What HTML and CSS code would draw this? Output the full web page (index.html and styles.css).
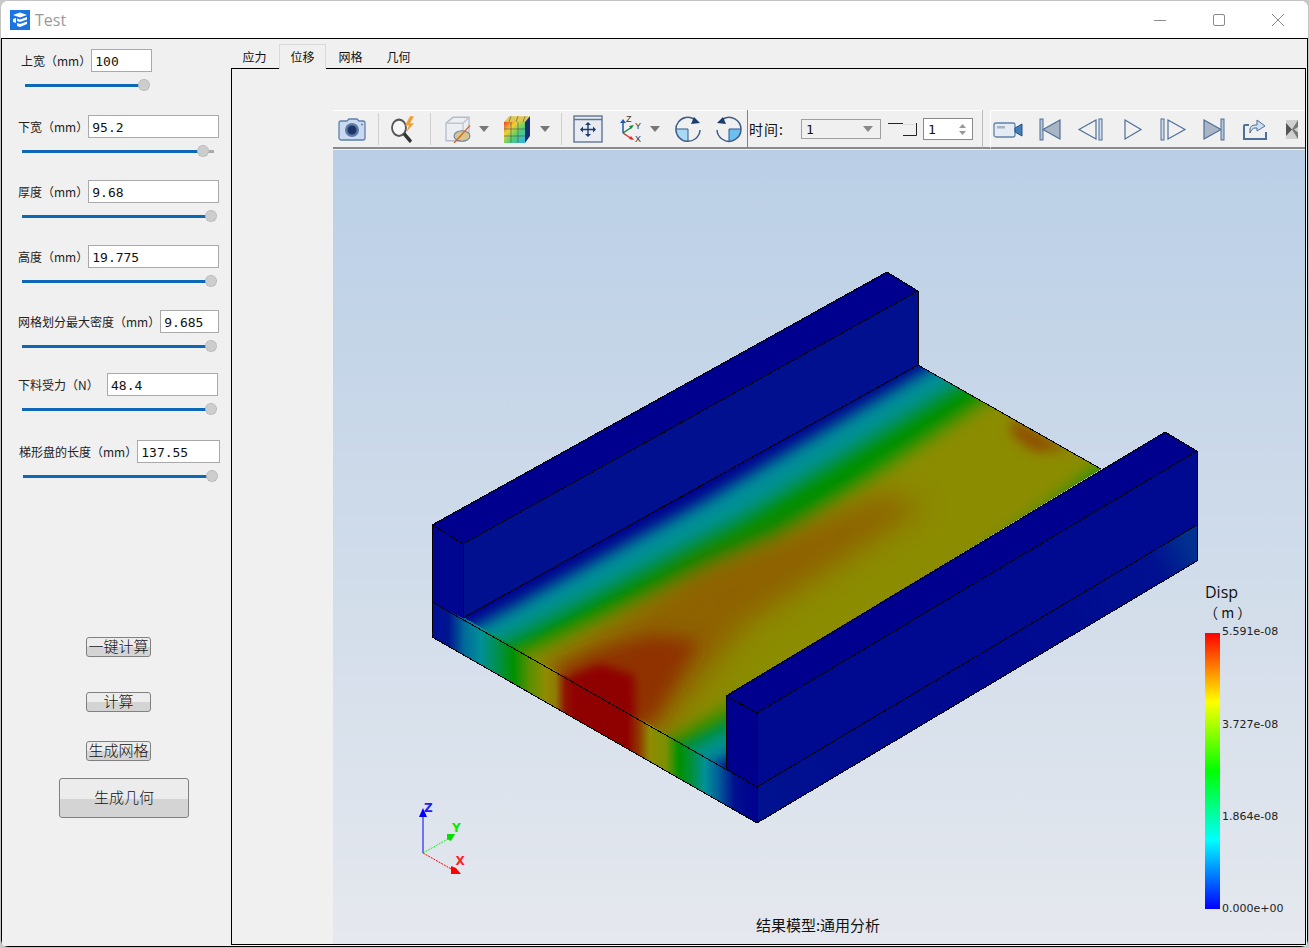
FILE: index.html
```html
<!DOCTYPE html>
<html lang="zh">
<head>
<meta charset="utf-8">
<title>Test</title>
<link rel="stylesheet" href="styles.css">
</head>
<body>
<div class="window">
  <header class="titlebar">
    <svg class="app-icon" width="20" height="20" viewBox="0 0 20 20"><rect width="20" height="20" fill="#1a74e2"/><path d="M3 5l7-2.500 7 2.500-7 2.500z M3 9l3-1v5l-3-1z M7 8.500l3 1 7-2.500v2.500l-7 2.500-3-1z M7 13l3 1 7-2.500v2.500l-7 3-3-1z" fill="#fff"/></svg>
    <span class="app-title">Test</span>
    <div class="win-controls">
      <svg width="12" height="12" viewBox="0 0 12 12"><path d="M0 6.500h12" stroke="#8a8a8a" fill="none"/></svg>
      <svg width="12" height="12" viewBox="0 0 12 12"><rect x=".5" y=".5" width="11" height="11" rx="1.500" stroke="#8a8a8a" fill="none"/></svg>
      <svg width="12" height="12" viewBox="0 0 12 12"><path d="M0 0l12 12M12 0L0 12" stroke="#8a8a8a" fill="none"/></svg>
    </div>
  </header>
  <div class="frame">
    <aside class="side">
      <div class="fields">
        <div class="field narrow">
          <div class="row"><label>上宽（mm）</label><input class="i61" value="100"></div>
          <div class="slider s125"><i class="fill" style="width:119px"></i><b class="thumb"></b></div>
        </div>
        <div class="field">
          <div class="row"><label>下宽（mm）</label><input class="i131" value="95.2"></div>
          <div class="slider s192"><i class="fill" style="width:181px"></i><b class="thumb"></b><i class="rest"></i></div>
        </div>
        <div class="field">
          <div class="row"><label>厚度（mm）</label><input class="i131" value="9.68"></div>
          <div class="slider s195"><i class="fill" style="width:189px"></i><b class="thumb"></b></div>
        </div>
        <div class="field">
          <div class="row"><label>高度（mm）</label><input class="i131" value="19.775"></div>
          <div class="slider s195"><i class="fill" style="width:189px"></i><b class="thumb"></b></div>
        </div>
        <div class="field">
          <div class="row"><label>网格划分最大密度（mm）</label><input class="i59" value="9.685"></div>
          <div class="slider s195"><i class="fill" style="width:189px"></i><b class="thumb"></b></div>
        </div>
        <div class="field">
          <div class="row"><label>下料受力（N）</label><input class="i111" value="48.4"></div>
          <div class="slider s195"><i class="fill" style="width:189px"></i><b class="thumb"></b></div>
        </div>
        <div class="field shifted">
          <div class="row"><label>梯形盘的长度（mm）</label><input class="i83" value="137.55"></div>
          <div class="slider s195"><i class="fill" style="width:189px"></i><b class="thumb"></b></div>
        </div>
      </div>
      <div class="actions">
        <button class="btn">一键计算</button>
        <button class="btn gap35">计算</button>
        <button class="btn gap29">生成网格</button>
        <button class="btn big gap17">生成几何</button>
      </div>
    </aside>
    <section class="workspace">
      <nav class="tabs">
        <span class="tab">应力</span>
        <span class="tab active">位移</span>
        <span class="tab">网格</span>
        <span class="tab">几何</span>
      </nav>
      <div class="pane">
        <div class="viewer">
          <div class="toolbars">
            <div class="toolbar main-tb">
              <svg class="ic m4" viewBox="0 0 30 24"><path d="M2 6a2 2 0 0 1 2-2h6l2-2h8l2 2h4a2 2 0 0 1 2 2v15a2 2 0 0 1-2 2H4a2 2 0 0 1-2-2z" fill="#c9daf0" stroke="#5f7fa8" stroke-width="1.300"/><circle cx="15" cy="13" r="7" fill="#5d79a8"/><circle cx="15" cy="13" r="4.500" fill="#1d3566"/><circle cx="25" cy="7.500" r="1" fill="#5f7fa8"/></svg>
              <span class="sep m11"></span>
              <svg class="ic m10" viewBox="0 0 30 24" preserveAspectRatio="none"><circle cx="10" cy="11" r="7" fill="#f4f6f8" stroke="#555" stroke-width="1.800"/><path d="M15 16l7 7" stroke="#333" stroke-width="3.200"/><path d="M21 1l-5 8h4l-3 6 8-8h-4l4-6z" fill="#f0a030"/></svg>
              <span class="sep m11"></span>
              <svg class="ic m12" viewBox="0 0 30 24" preserveAspectRatio="none"><path d="M3 7l7-5h16v14l-6 6H3z" fill="#eceef2" stroke="#b4bcc8" stroke-width="1.300"/><path d="M3 7h17v15M20 7l6-5" fill="none" stroke="#c0c6d0" stroke-width="1.300"/><ellipse cx="19" cy="18" rx="8" ry="4.500" fill="#d9c48c" stroke="#5f7fa8"/><path d="M11 24L27 9" stroke="#d9602a" stroke-width="1.300"/></svg>
              <svg class="arrow m6" viewBox="0 0 10 6"><path d="M0 0h10L5 6z" fill="#777"/></svg>
              <svg class="ic m13" viewBox="0 0 30 24" preserveAspectRatio="none"><defs><linearGradient id="rb" x1="0" y1="0" x2="1" y2="1"><stop offset="0" stop-color="#e84030"/><stop offset=".3" stop-color="#f0d030"/><stop offset=".6" stop-color="#50d070"/><stop offset="1" stop-color="#30b0f8"/></linearGradient></defs><path d="M2 6l5-5h21l-5 5z" fill="#e0c850"/><rect x="2" y="6" width="21" height="18" fill="url(#rb)"/><path d="M23 6l5-5v17l-5 6z" fill="#16306e"/><path d="M9 6v18M16 6v18M2 12h21M2 18h21M9 1L7 6M16 1l-2 5M23 1l-2 5" stroke="#445" stroke-width=".5" fill="none"/></svg>
              <svg class="arrow m8" viewBox="0 0 10 6"><path d="M0 0h10L5 6z" fill="#777"/></svg>
              <span class="sep m11"></span>
              <svg class="ic m11" viewBox="0 0 30 28"><rect x="1" y="1" width="28" height="26" fill="#e8ecf2" stroke="#5f7694" stroke-width="1.400"/><path d="M1 4.500h28" stroke="#5f7694" stroke-width="1.300"/><path d="M15 8v13M8 14.500h14" stroke="#1d3b6c" stroke-width="1.400"/><path d="M15 7l-3 3h6zM15 22l-3-3h6zM7 14.500l3-3v6zM23 14.500l-3-3v6z" fill="#1d3b6c"/></svg>
              <svg class="ic m10" viewBox="0 0 30 28"><path d="M10 18V7" stroke="#1f5ab0" stroke-width="1.500"/><path d="M10 4l-3 4h6z" fill="#1f5ab0"/><path d="M10 18l9-6" stroke="#168a3c" stroke-width="1.500"/><path d="M21 10l-5 1 2 3z" fill="#168a3c"/><path d="M10 18l9 6" stroke="#e02a2a" stroke-width="1.500"/><path d="M21 25l-5-1 2-3z" fill="#e02a2a"/><text x="13" y="7" class="axis-lbl">Z</text><text x="22" y="14" class="axis-lbl">Y</text><text x="22" y="27" class="axis-lbl">X</text></svg>
              <svg class="arrow m7" viewBox="0 0 10 6"><path d="M0 0h10L5 6z" fill="#777"/></svg>
              <svg class="ic m13" viewBox="0 0 30 28"><path d="M3 14h12v12a12 12 0 0 1-12-12z" fill="#a8daf5"/><path d="M3 14h12v12" fill="none" stroke="#2a5a90"/><path d="M22 24A12 12 0 1 1 21 4" fill="none" stroke="#3d5d88" stroke-width="1.500"/><path d="M27 8l-9 1 3-7z" fill="#1d3b6c"/><path d="M27 15a12 12 0 0 1-5 9" fill="none" stroke="#3d5d88" stroke-width="1.500"/></svg>
              <svg class="ic m11" viewBox="0 0 30 28"><path d="M15 14h12a12 12 0 0 1-12 12z" fill="#6cc0f0"/><path d="M27 14H15v12" fill="none" stroke="#2a5a90"/><path d="M8 24a12 12 0 0 0 19-10 12 12 0 0 0-18-10" fill="none" stroke="#3d5d88" stroke-width="1.500"/><path d="M3 8l9 1-3-7z" fill="#1d3b6c"/><path d="M3 15a12 12 0 0 0 5 9" fill="none" stroke="#3d5d88" stroke-width="1.500"/></svg>
              <span class="vline m3"></span>
              <span class="time-lbl">时间:</span>
              <div class="combo"><span>1</span><svg width="10" height="6" viewBox="0 0 10 6"><path d="M0 0h10L5 6z" fill="#888"/></svg></div>
              <svg class="step" viewBox="0 0 29 16"><path d="M0 2.500h15M15 14.500h13.500V2" fill="none" stroke="#222"/><path d="M15 3.500h12.500" stroke="#ddd" fill="none"/></svg>
              <div class="spin"><span>1</span><svg width="7" height="13" viewBox="0 0 7 13"><path d="M3.500 1L7 5H0zM3.500 12L0 8h7z" fill="#999"/></svg></div>
            </div>
            <span class="tb-gap"></span>
            <div class="toolbar player">
              <svg class="pl" viewBox="0 0 34 24"><rect x="2" y="6" width="21" height="14" rx="2" fill="#e4ebf3" stroke="#5f82aa" stroke-width="1.300"/><rect x="5" y="9" width="8" height="2.500" fill="#a8b2c0"/><path d="M23 11l7-4v12l-7-4z" fill="#3f80b8" stroke="#2d4f80"/></svg>
              <svg class="pl" viewBox="0 0 34 24"><rect x="7" y="2" width="3" height="21" fill="#b9c6d6" stroke="#4e6f98"/><path d="M10 12.500L27 3v19z" fill="#a9b5c4" stroke="#4e6f98" stroke-width="1.200"/></svg>
              <svg class="pl" viewBox="0 0 34 24"><path d="M5 12.500L22 3v19z" fill="#f0f0f0" stroke="#4e6f98" stroke-width="1.200"/><rect x="25" y="2" width="3" height="21" fill="#d2dbe6" stroke="#4e6f98"/></svg>
              <svg class="pl" viewBox="0 0 34 24"><path d="M10 3l16 9.500L10 22z" fill="#f0f0f0" stroke="#4e6f98" stroke-width="1.200"/></svg>
              <svg class="pl" viewBox="0 0 34 24"><rect x="5" y="2" width="3" height="21" fill="#d2dbe6" stroke="#4e6f98"/><path d="M12 3l17 9.500L12 22z" fill="#f0f0f0" stroke="#4e6f98" stroke-width="1.200"/></svg>
              <svg class="pl" viewBox="0 0 34 24"><path d="M7 3l17 9.500L7 22z" fill="#a9b5c4" stroke="#4e6f98" stroke-width="1.200"/><rect x="24" y="2" width="3" height="21" fill="#b9c6d6" stroke="#4e6f98"/></svg>
              <svg class="pl" viewBox="0 0 34 24"><path d="M11 8H7a1 1 0 0 0-1 1v13h22v-7" fill="none" stroke="#4e6f98" stroke-width="2"/><path d="M12 16v-4c0-2 2-4 5-4h2V3l8 6-8 5V11h-2c-2 0-4 2-5 5z" fill="#cfe0f2" stroke="#4e6f98"/></svg>
              <svg class="pl" viewBox="0 0 34 24"><rect x="7" y="3" width="12" height="19" fill="#d0d0d0"/><path d="M7 6l6 6.500L7 19z" fill="#555"/><path d="M19 3v7l-4 2.500 4 3V22l-6-9.500z" fill="#777"/></svg>
            </div>
          </div>
          <div class="canvas">
            <svg class="scene" viewBox="333 150 972 794" width="972" height="794">
              <defs>
                <linearGradient id="bg" x1="0" y1="0" x2="0" y2="1"><stop offset="0" stop-color="#bacfe6"/><stop offset="1" stop-color="#e5e8ee"/></linearGradient>
                <linearGradient id="front" gradientUnits="userSpaceOnUse" x1="432" y1="0" x2="757" y2="0">
                  <stop offset="0" stop-color="#00109a"/><stop offset=".05" stop-color="#00158f"/><stop offset=".1" stop-color="#006a98"/><stop offset=".15" stop-color="#009098"/><stop offset=".2" stop-color="#009050"/><stop offset=".25" stop-color="#009000"/><stop offset=".3" stop-color="#5a9000"/><stop offset=".35" stop-color="#8f8c00"/><stop offset=".38" stop-color="#8f7a00"/><stop offset=".41" stop-color="#8f1500"/><stop offset=".44" stop-color="#8f0000"/><stop offset=".6" stop-color="#8f0000"/><stop offset=".635" stop-color="#8f3500"/><stop offset=".67" stop-color="#8f8c00"/><stop offset=".72" stop-color="#7a9000"/><stop offset=".76" stop-color="#009000"/><stop offset=".8" stop-color="#009040"/><stop offset=".84" stop-color="#009098"/><stop offset=".88" stop-color="#006098"/><stop offset=".93" stop-color="#00108f"/><stop offset="1" stop-color="#00008f"/>
                </linearGradient>
                <linearGradient id="rside" gradientUnits="userSpaceOnUse" x1="757" y1="790" x2="1197" y2="560"><stop offset="0" stop-color="#00128f"/><stop offset=".5" stop-color="#000890"/><stop offset=".92" stop-color="#001090"/><stop offset="1" stop-color="#003090"/></linearGradient>
                <linearGradient id="legend" x1="0" y1="0" x2="0" y2="1"><stop offset="0" stop-color="#f00"/><stop offset=".25" stop-color="#ff0"/><stop offset=".5" stop-color="#0f0"/><stop offset=".75" stop-color="#0ff"/><stop offset="1" stop-color="#00f"/></linearGradient>
                <clipPath id="plate"><polygon points="463,618 918,365 1101,469 726,696 726,769"/></clipPath>
                <filter id="b8" x="-20%" y="-20%" width="140%" height="140%"><feGaussianBlur stdDeviation="8"/></filter>
                <filter id="b5" x="-40%" y="-40%" width="180%" height="180%"><feGaussianBlur stdDeviation="5"/></filter>
                <filter id="b6" x="-40%" y="-40%" width="180%" height="180%"><feGaussianBlur stdDeviation="6"/></filter>
                <filter id="b9" x="-30%" y="-30%" width="160%" height="160%"><feGaussianBlur stdDeviation="9"/></filter>
                <filter id="b14" x="-30%" y="-30%" width="160%" height="160%"><feGaussianBlur stdDeviation="14"/></filter>
              </defs>
              <rect x="333" y="150" width="972" height="794" fill="url(#bg)"/>

              <g clip-path="url(#plate)">
                <rect x="440" y="340" width="680" height="450" fill="#00008f"/>
                <g filter="url(#b8)">
                  <polygon fill="#009098" points="442,645 706,500 960,350 1163,466 947,638 683,783"/>
                  <polygon fill="#009000" points="465,658 735,517 984,364 1145,455 925,625 659,770"/>
                  <polygon fill="#8c8c00" points="491,673 780,542 1019,383 1123,443 902,613 633,755"/>
                </g>
                <polygon filter="url(#b14)" fill="#8f5c00" opacity=".85" points="540,670 655,740 745,625 925,505 880,495 700,565"/>
                <polygon filter="url(#b9)" fill="#8f3000" points="548,672 648,730 700,640 650,635 600,650"/>
                <polygon filter="url(#b5)" fill="#8f0000" points="556,682 636,728 634,675 600,664"/>
                <polygon filter="url(#b6)" fill="#8f5000" points="1012,418 1068,450 1035,452 1012,436"/>
              </g>

              <g class="crisp">
                <polygon fill="url(#front)" points="432,602 463,617 726,768 757,787 757,823 432,637"/>
                <polygon fill="url(#rside)" points="757,787 1197,525 1197,561 757,823"/>
                <polygon fill="#00068f" points="432,525 463,544 463,618 432,602"/>
                <polygon fill="#00108f" points="463,544 918,291 918,365 463,618"/>
                <polygon fill="#00008f" points="432,525 887,272 918,291 463,544"/>
                <polygon fill="#00008f" points="726,696 1165,432 1197,451 757,713"/>
                <polygon fill="#00008f" points="726,696 757,713 757,787 726,769"/>
                <polygon fill="#000a90" points="757,713 1197,451 1197,525 757,787"/>
                <path class="edges" d="M432 525L887 272L918 291L918 365L1101 469M432 525L463 544L918 291M432 525V637L757 823L1197 561V451L1165 432L726 696L757 713L1197 451M463 544V618L918 365M432 602L757 787L1197 525M757 713V823M726 696V769"/>
              </g>

              <g class="triad">
                <path d="M423 853V815" stroke="#0000ff"/><path d="M423 808l-4 9h8z" fill="#0000ff"/>
                <path d="M423 853L448 839" stroke="#00ff00" stroke-dasharray="2 1"/><path d="M447 834h8l-4 7-4-2z" fill="#00e000"/>
                <path d="M423 853L453 870" stroke="#ff0000" stroke-dasharray="2 1"/><path d="M451 866l5 2 5 6h-10z" fill="#ff0000"/>
                <text x="424" y="812" fill="#2020ff">Z</text>
                <text x="452" y="832" fill="#00ee00">Y</text>
                <text x="455.500" y="865" fill="#ff2020">X</text>
              </g>

              <rect x="1205" y="633" width="15" height="276" fill="url(#legend)"/>
              <text x="1205" y="598" class="lg-title">Disp</text>
              <text x="1204" y="618" class="lg-unit">（ m ）</text>
              <text x="1222" y="635" class="lg-num">5.591e-08</text>
              <text x="1222" y="728" class="lg-num">3.727e-08</text>
              <text x="1222" y="820" class="lg-num">1.864e-08</text>
              <text x="1222" y="912" class="lg-num">0.000e+00</text>
              <text x="818" y="931" class="caption">结果模型:通用分析</text>
            </svg>
          </div>
        </div>
      </div>
    </section>
  </div>
</div>
</body>
</html>
```
FILE: styles.css
```css
* { box-sizing: border-box; }
html, body { margin: 0; padding: 0; }
body {
  width: 1309px;
  height: 948px;
  overflow: hidden;
  background: #c8c8c8;
  font-family: "Noto Sans CJK SC", "Noto Sans", sans-serif;
  color: #111;
}
.window {
  width: 1309px;
  height: 948px;
  background: #fff;
  border: 1px solid #c4c4c4;
  border-radius: 8px;
  overflow: hidden;
  display: flex;
  flex-direction: column;
}
.titlebar {
  height: 37px;
  flex: none;
  display: flex;
  align-items: center;
  padding-left: 9px;
  background: #fff;
}
.app-title {
  margin-left: 5px;
  font: 16px "Open Sans", "Noto Sans", sans-serif;
  color: #9a9a9a;
}
.win-controls {
  margin-left: auto;
  display: flex;
  gap: 47px;
  padding-right: 24px;
}
.frame {
  flex: none;
  width: 1307px;
  height: 909px;
  border: 1px solid #000;
  background: #f0f0f0;
  display: flex;
}
.side {
  width: 229px;
  flex: none;
  padding-top: 10px;
}
.fields {
  display: grid;
  grid-template-rows: 66px 65px 65px 65px 63px 67px 42px;
}
.field {
  margin-left: 16px;
  width: 200px;
}
.field.narrow { margin-left: 19px; width: 130px; }
.field.shifted { margin-left: 17px; }
.row {
  height: 23px;
  width: 100%;
  display: flex;
  align-items: center;
  justify-content: space-between;
}
.row label {
  font-size: 12px;
  white-space: nowrap;
  color: #222;
}
.row input {
  height: 23px;
  flex: none;
  padding: 2px 3px 0;
  border: 1px solid #a9a9a9;
  background: #fff;
  font: 13px "DejaVu Sans Mono", "Liberation Mono", monospace;
  color: #111;
  outline: none;
  border-radius: 0;
}
.i61 { width: 61px; }
.i131 { width: 131px; }
.i59 { width: 59px; }
.i111 { width: 111px; }
.i83 { width: 83px; }
.slider {
  margin: 7px 0 0 4px;
  height: 12px;
  display: flex;
  align-items: center;
}
.s125 { width: 125px; }
.s192 { width: 192px; }
.s195 { width: 195px; }
.fill { display: block; height: 3px; background: #0f67b8; flex: none; }
.rest { display: block; height: 3px; background: #aaa; flex: 1; }
.thumb {
  display: block;
  flex: none;
  width: 12px;
  height: 12px;
  margin-left: -6px;
  margin-right: -1px;
  border-radius: 50%;
  background: #cdcdcd;
  border: 1px dotted #a8a8a8;
  position: relative;
}
.actions {
  margin-top: 155px;
  display: flex;
  flex-direction: column;
  align-items: flex-start;
}
.btn {
  margin-left: 84px;
  width: 65px;
  height: 20px;
  padding: 0 0 2px;
  border: 1px solid #808080;
  border-radius: 3px;
  background: linear-gradient(#ededed 50%, #d4d4d4 50%);
  font: 300 15px/16px "Noto Sans CJK SC", sans-serif;
  color: #111;
}
.btn.big {
  margin-left: 57px;
  width: 130px;
  height: 40px;
  background: linear-gradient(#ececec 52%, #d4d4d4 52%);
}
.gap35 { margin-top: 35px; }
.gap29 { margin-top: 29px; }
.gap17 { margin-top: 17px; }
.workspace {
  width: 1075px;
  flex: none;
  display: flex;
  flex-direction: column;
  padding-top: 5px;
}
.tabs {
  height: 24px;
  flex: none;
  display: flex;
}
.tab {
  width: 47px;
  height: 24px;
  margin-right: 1px;
  font-size: 12px;
  line-height: 26px;
  text-align: center;
  color: #111;
}
.tab.active {
  height: 25px;
  position: relative;
  z-index: 1;
  background: #f0f0f0;
  border: 1px solid #d9d9d9;
  border-bottom: 0;
  line-height: 24px;
}
.pane {
  height: 877px;
  flex: none;
  border: 1px solid #000;
  padding: 41px 0 0 101px;
  background: #f0f0f0;
}
.viewer {
  width: 972px;
  height: 834px;
  display: flex;
  flex-direction: column;
}
.toolbars {
  height: 40px;
  flex: none;
  display: flex;
  align-items: stretch;
  background: #f0f0f0;
}
.toolbar {
  display: flex;
  align-items: center;
  border-top: 1px solid #fff;
}
.main-tb {
  width: 649px;
  border-bottom: 2px solid #8a8a8a;
  height: 39px;
}
.tb-gap {
  width: 8px;
  height: 39px;
  flex: none;
  border-left: 1px solid #bbb;
  border-bottom: 2px solid #8a8a8a;
}
.player {
  flex: 1;
  height: 39px;
  gap: 7px;
  padding-left: 1px;
  border-left: 1px solid #fff;
  border-bottom: 2px solid #8a8a8a;
  overflow: hidden;
}
.ic { width: 30px; height: 28px; flex: none; }
.arrow { width: 10px; height: 6px; flex: none; }
.pl { width: 34px; height: 24px; flex: none; }
.sep { width: 1px; height: 32px; background: #cfcfcf; flex: none; }
.vline { width: 1px; height: 38px; background: #808080; flex: none; }
.m3 { margin-left: 3px; }
.m4 { margin-left: 4px; }
.m6 { margin-left: 6px; }
.m7 { margin-left: 7px; }
.m8 { margin-left: 8px; }
.m10 { margin-left: 10px; }
.m11 { margin-left: 11px; }
.m12 { margin-left: 12px; }
.m13 { margin-left: 13px; }
.axis-lbl { font: 9px "Liberation Sans", sans-serif; fill: #333; }
.time-lbl {
  margin-left: 1px;
  width: 38px;
  flex: none;
  font-size: 14px;
  letter-spacing: 1px;
  color: #111;
  white-space: nowrap;
}
.combo {
  margin-left: 14px;
  width: 80px;
  height: 20px;
  flex: none;
  border: 1px solid #a0a0a0;
  background: #f0f0f0;
  display: flex;
  align-items: center;
  justify-content: space-between;
  padding: 0 7px 0 4px;
  font: 13px "DejaVu Sans Mono", monospace;
}
.step { margin-left: 7px; width: 29px; height: 16px; flex: none; }
.spin {
  margin-left: 6px;
  width: 50px;
  height: 22px;
  flex: none;
  border: 1px solid #8a8a8a;
  background: #fff;
  display: flex;
  align-items: center;
  justify-content: space-between;
  padding: 0 6px 0 4px;
  font: 13px "DejaVu Sans Mono", monospace;
}
.canvas { flex: 1; overflow: hidden; }
.scene { display: block; }
.crisp polygon { shape-rendering: crispEdges; }
.edges { fill: none; stroke: #000; stroke-width: 1; shape-rendering: crispEdges; }
.triad path { stroke-width: 1; }
.triad text { font: bold 12px "DejaVu Sans", sans-serif; }
.lg-title { font: 16px "Open Sans", sans-serif; fill: #111; }
.lg-unit { font: 14px "Noto Sans CJK SC", sans-serif; fill: #111; }
.lg-num { font: 11px "DejaVu Sans", sans-serif; fill: #222; }
.caption { font: 15px "Noto Sans CJK SC", sans-serif; fill: #111; text-anchor: middle; }
```
